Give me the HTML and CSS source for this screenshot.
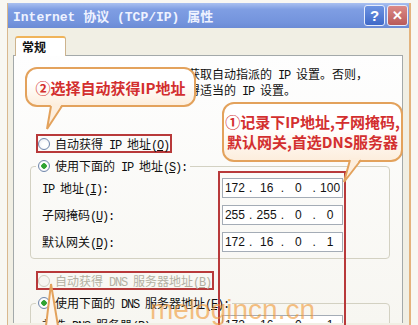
FILE: index.html
```html
<!DOCTYPE html>
<html lang="zh-CN">
<head>
    <meta charset="UTF-8">
    <title>Internet 协议 (TCP/IP) 属性</title>
    <link rel="stylesheet" href="styles.css">
</head>
<body>
    <div class="window">
        <div class="titlebar">
            <span class="title">Internet 协议 (TCP/IP) 属性</span>
            <div class="title-buttons">
                <span class="tbtn help">?</span>
                <span class="tbtn close">✕</span>
            </div>
        </div>

        <div class="tabs">
            <div class="tab">常规</div>
        </div>

        <div class="panel">
            <p class="intro">如果网络支持此功能，则可以获取自动指派的<span class="en"> IP </span>设置。否则，<br>您需要从网络系统管理员处获得适当的<span class="en"> IP </span>设置。</p>

            <div class="radio-row marked"><span class="radio"></span><span class="label">自动获得<span class="en"> IP </span>地址<span class="en">(<u>O</u>)</span></span></div>

            <fieldset class="group">
                <legend><span class="radio checked"></span><span class="label">使用下面的<span class="en"> IP </span>地址<span class="en">(<u>S</u>):</span></span></legend>
                <div class="field-row">
                    <label><span class="en">IP </span>地址<span class="en">(<u>I</u>):</span></label>
                    <div class="ip"><span class="seg">172</span><span class="dot">.</span><span class="seg">16</span><span class="dot">.</span><span class="seg">0</span><span class="dot">.</span><span class="seg">100</span></div>
                </div>
                <div class="field-row">
                    <label>子网掩码<span class="en">(<u>U</u>):</span></label>
                    <div class="ip"><span class="seg">255</span><span class="dot">.</span><span class="seg">255</span><span class="dot">.</span><span class="seg">0</span><span class="dot">.</span><span class="seg">0</span></div>
                </div>
                <div class="field-row">
                    <label>默认网关<span class="en">(<u>D</u>):</span></label>
                    <div class="ip"><span class="seg">172</span><span class="dot">.</span><span class="seg">16</span><span class="dot">.</span><span class="seg">0</span><span class="dot">.</span><span class="seg">1</span></div>
                </div>
            </fieldset>

            <div class="radio-row marked disabled"><span class="radio"></span><span class="label">自动获得<span class="en"> DNS </span>服务器地址<span class="en">(<u>B</u>)</span></span></div>

            <fieldset class="group">
                <legend><span class="radio checked"></span><span class="label">使用下面的<span class="en"> DNS </span>服务器地址<span class="en">(<u>E</u>):</span></span></legend>
                <div class="field-row">
                    <label>首选<span class="en"> DNS </span>服务器<span class="en">(<u>P</u>):</span></label>
                    <div class="ip"><span class="seg">172</span><span class="dot">.</span><span class="seg">16</span><span class="dot">.</span><span class="seg">0</span><span class="dot">.</span><span class="seg">1</span></div>
                </div>
            </fieldset>
        </div>
    </div>

    <!-- annotations drawn over the dialog -->
    <div class="note note-dhcp">②选择自动获得IP地址</div>
    <div class="note note-record">①记录下IP地址,子网掩码,<br>默认网关,首选DNS服务器</div>
    <div class="mark-fields"></div>

    <svg class="tails" width="418" height="325" viewBox="0 0 418 325" xmlns="http://www.w3.org/2000/svg">
        <polygon points="51,104 62,104 47,128" fill="#fdeedd"/>
        <path d="M51,106 L47,129 L62,106" fill="none" stroke="#e3a25c" stroke-width="2"/>
        <polygon points="350,158 361,158 344,181" fill="#fdeedd"/>
        <path d="M350,160 L344,182 L361,160" fill="none" stroke="#e3a25c" stroke-width="2"/>
        <path d="M46,326 L51,284 L58,326" fill="#fdf6ee" stroke="#e3a25c" stroke-width="2"/>
    </svg>

    <div class="watermark">melogincn.cn</div>
</body>
</html>
```

FILE: styles.css
```css
* {
    box-sizing: border-box;
}

:root {
    --clr-frame: #e3b37c;
    --clr-window: #f1efe4;
    --clr-border: #a3a9aa;
    --clr-group: #d3d1c2;
    --clr-mark: #b8393a;
    --clr-note: #e3a25c;
    --clr-note-text: #d32f2f;

    --ff-ui: "Noto Sans CJK SC", sans-serif;
    --ff-en: "Liberation Mono", monospace;
}

body {
    position: relative;
    width: 418px;
    height: 325px;
    margin: 0;
    overflow: hidden;
    background: #f8f7f2;
    font-family: var(--ff-ui);
    font-size: 12px;
    color: #111;
}

.en {
    font-family: var(--ff-en);
    letter-spacing: -1.2px;
}

.window {
    width: 404px;
    height: 322px;
    margin: 3px 0 0 7px;
    border-left: 1px solid #d9b88e;
    border-right: 2px solid var(--clr-frame);
    background: var(--clr-window);
}

.titlebar {
    display: flex;
    align-items: center;
    justify-content: space-between;
    height: 25px;
    padding-left: 5px;
    background: linear-gradient(180deg, #a9c0f0 0%, #7f9ee3 25%, #7393dc 80%, #6b8bd5 100%);
}

.title {
    font-family: "Liberation Mono", "Noto Sans CJK SC", monospace;
    font-size: 13px;
    font-weight: 700;
    color: #eef2ff;
    white-space: pre;
}

.title-buttons {
    display: flex;
    gap: 2px;
    margin-right: 1px;
}

.tbtn {
    display: flex;
    align-items: center;
    justify-content: center;
    width: 21px;
    height: 21px;
    border: 1px solid #e6ecfb;
    border-radius: 3px;
    color: #fff;
    font-family: "Liberation Sans", sans-serif;
    font-weight: 700;
}

.help {
    background: linear-gradient(180deg, #6d93e2, #3f69c8);
    font-size: 15px;
}

.close {
    background: linear-gradient(180deg, #dc8a86, #b85a5a);
    font-size: 13px;
}

.tabs {
    display: flex;
    align-items: flex-end;
    height: 27px;
    padding-left: 7px;
}

.tab {
    position: relative;
    z-index: 1;
    width: 51px;
    height: 20px;
    margin-bottom: -1px;
    padding: 1px 0 0 6px;
    background: #fff;
    border: 1px solid #cdb38d;
    border-top: 2px solid #f0b45a;
    border-bottom: none;
    border-radius: 3px 3px 0 0;
    font-weight: 700;
    line-height: 16px;
}

.panel {
    width: 390px;
    height: 268px;
    margin-left: 5px;
    border: 1px solid var(--clr-border);
    border-bottom: none;
    background: linear-gradient(180deg, #fefefe, #f7f6f1);
    overflow: hidden;
}

.intro {
    margin: 11px 0 0 18px;
    line-height: 13px;
    white-space: nowrap;
}

.label {
    white-space: pre;
}

.radio-row {
    display: flex;
    align-items: center;
    gap: 5px;
    width: max-content;
    height: 19px;
    margin-left: 22px;
    padding-right: 1px;
}

.radio-row.marked {
    border: 2px solid var(--clr-mark);
}

.panel > .radio-row:nth-of-type(1) {
    margin-top: 35px;
}

.radio-row.disabled {
    margin-top: 12px;
    color: #b3b0a2;
}

.radio {
    display: inline-block;
    flex: none;
    width: 12px;
    height: 12px;
    border: 1px solid #6f86ab;
    border-radius: 50%;
    background: radial-gradient(circle at 60% 60%, #fff 30%, #e4e6ee 100%);
}

.radio.checked {
    background: radial-gradient(circle, #2fa332 0 2.5px, #fff 3px 50%, #e4e6ee 100%);
}

.disabled .radio {
    border-color: #cfccbf;
    background: #f6f5f0;
}

.group {
    margin: 5px 12px 0 16px;
    padding: 4px 0 6px 11px;
    border: 1px solid var(--clr-group);
    border-radius: 4px;
}

.group legend {
    display: flex;
    align-items: center;
    gap: 5px;
    height: 16px;
    margin-left: -6px;
    padding: 0 3px 0 2px;
}

.field-row {
    display: flex;
    align-items: center;
    height: 20px;
    margin-bottom: 7px;
}

.field-row:last-child {
    margin-bottom: 0;
}

.field-row label {
    width: 180px;
    white-space: pre;
}

.ip {
    display: flex;
    align-items: center;
    width: 121px;
    height: 20px;
    border: 1px solid #a4acb6;
    background: #fff;
    font-family: "Liberation Sans", sans-serif;
    font-size: 12px;
    line-height: 18px;
}

.seg {
    width: 24px;
    text-align: center;
}

.dot {
    width: 8px;
    text-align: center;
}

.note {
    position: absolute;
    display: flex;
    align-items: center;
    justify-content: center;
    border: 2px solid var(--clr-note);
    border-radius: 12px;
    background: linear-gradient(180deg, #ffffff 40%, #fdeedd 100%);
    color: var(--clr-note-text);
    font-size: 15px;
    font-weight: 700;
    text-align: center;
}

.note-dhcp {
    left: 25px;
    top: 67px;
    width: 171px;
    height: 40px;
}

.note-record {
    left: 222px;
    top: 102px;
    width: 181px;
    height: 60px;
    line-height: 20px;
}

.mark-fields {
    position: absolute;
    left: 218px;
    top: 171px;
    width: 128px;
    height: 170px;
    border: 2px solid var(--clr-mark);
    border-bottom: none;
}

.tails {
    position: absolute;
    left: 0;
    top: 0;
    pointer-events: none;
}

.watermark {
    position: absolute;
    left: 150px;
    top: 296px;
    font-family: "Liberation Sans", sans-serif;
    font-size: 28px;
    line-height: 28px;
    color: rgba(240, 150, 50, 0.6);
}
```
